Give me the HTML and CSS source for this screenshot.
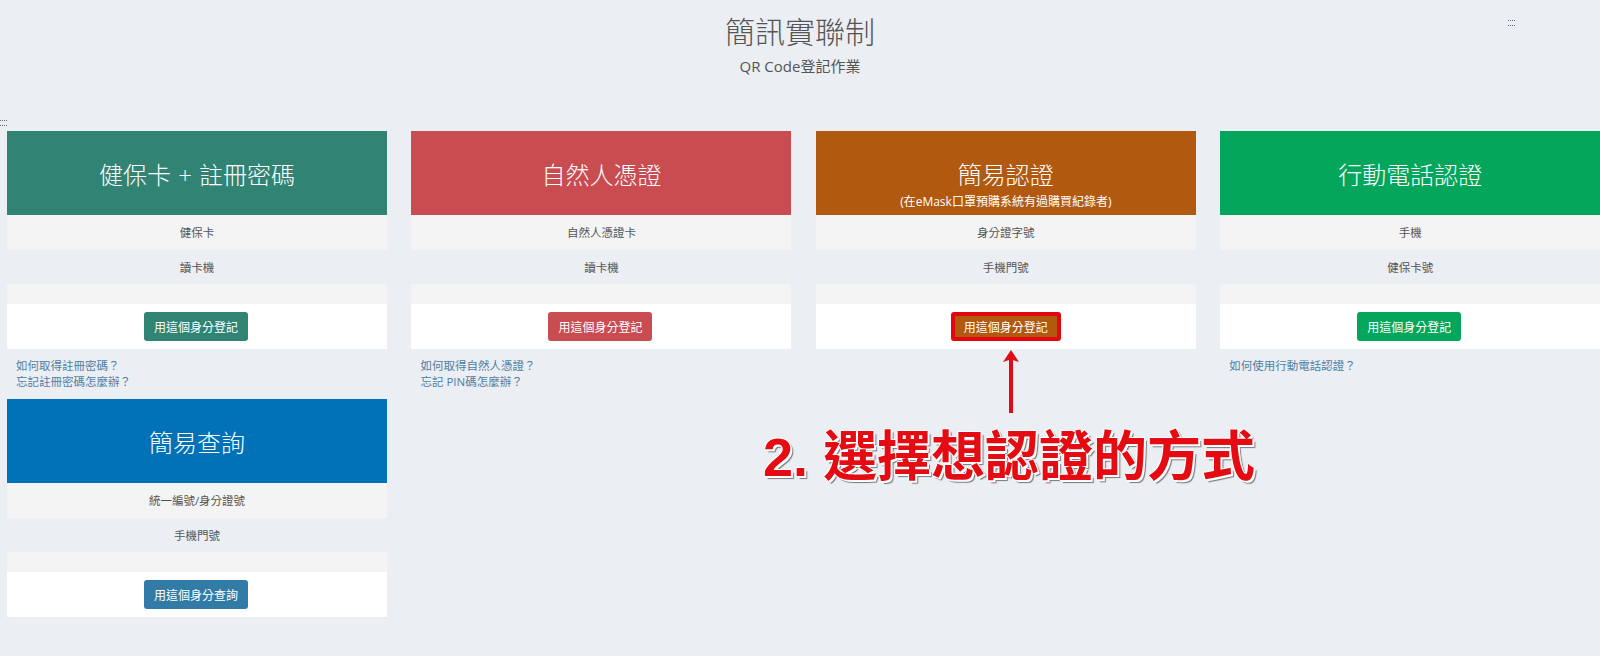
FILE: index.html
```html
<!DOCTYPE html>
<html lang="zh-Hant">
<head>
    <meta charset="UTF-8">
    <title>簡訊實聯制</title>
    <link rel="stylesheet" href="styles.css">
</head>
<body>
    <span class="dots dots-top"></span>
    <span class="dots dots-left"></span>

    <header class="page-head">
        <h1>簡訊實聯制</h1>
        <p>QR Code登記作業</p>
    </header>

    <main class="cards">
        <section class="card">
            <div class="card-title green"><h2>健保卡 + 註冊密碼</h2></div>
            <ul class="card-rows">
                <li>健保卡</li>
                <li>讀卡機</li>
                <li></li>
            </ul>
            <div class="card-foot"><button class="btn green">用這個身分登記</button></div>
            <div class="card-links">
                <a href="#">如何取得註冊密碼？</a>
                <a href="#">忘記註冊密碼怎麼辦？</a>
            </div>
        </section>

        <section class="card">
            <div class="card-title red"><h2>自然人憑證</h2></div>
            <ul class="card-rows">
                <li>自然人憑證卡</li>
                <li>讀卡機</li>
                <li></li>
            </ul>
            <div class="card-foot"><button class="btn red">用這個身分登記</button></div>
            <div class="card-links">
                <a href="#">如何取得自然人憑證？</a>
                <a href="#">忘記 PIN碼怎麼辦？</a>
            </div>
        </section>

        <section class="card">
            <div class="card-title orange has-note">
                <h2>簡易認證</h2>
                <small>(在eMask口罩預購系統有過購買紀錄者)</small>
            </div>
            <ul class="card-rows">
                <li>身分證字號</li>
                <li>手機門號</li>
                <li></li>
            </ul>
            <div class="card-foot"><button class="btn orange marked">用這個身分登記</button></div>
        </section>

        <section class="card">
            <div class="card-title bright-green"><h2>行動電話認證</h2></div>
            <ul class="card-rows">
                <li>手機</li>
                <li>健保卡號</li>
                <li></li>
            </ul>
            <div class="card-foot"><button class="btn bright-green">用這個身分登記</button></div>
            <div class="card-links">
                <a href="#">如何使用行動電話認證？</a>
            </div>
        </section>

        <section class="card">
            <div class="card-title blue"><h2>簡易查詢</h2></div>
            <ul class="card-rows">
                <li>統一編號/身分證號</li>
                <li>手機門號</li>
                <li></li>
            </ul>
            <div class="card-foot"><button class="btn steel">用這個身分查詢</button></div>
        </section>
    </main>

    <svg class="arrow" width="18" height="64" viewBox="0 0 18 64">
        <path d="M9 0 L17 12 L11 10 L11 63 L7 63 L7 10 L1 12 Z" fill="#e00b14"/>
    </svg>
    <div class="callout">2. 選擇想認證的方式</div>
</body>
</html>
```

FILE: styles.css
```css
* {
    box-sizing: border-box;
}
body {
    margin: 0;
    height: 656px;
    overflow: hidden;
    position: relative;
    background-color: #ebeef3;
    color: #555;
    font-family: "Open Sans", "Noto Sans CJK TC", sans-serif;
    font-size: 11.5px;
}
.page-head {
    height: 131px;
    padding-top: 12px;
    text-align: center;
    color: #555;
}
.page-head h1 {
    margin: 0;
    font-size: 30px;
    line-height: 40px;
    font-weight: 300;
}
.page-head p {
    margin: 4px 0 0;
    font-size: 15px;
    line-height: 20px;
}
.dots {
    position: absolute;
    width: 7px;
    height: 6px;
    border-top: 1px dotted #667;
    border-bottom: 1px dotted #667;
}
.dots-top { left: 1508px; top: 20px; }
.dots-left { left: 0; top: 120px; }

.cards {
    display: grid;
    grid-template-columns: repeat(4, 380px);
    column-gap: 24.4px;
    padding-left: 7px;
    align-items: start;
}
.card-title {
    height: 84px;
    padding-top: 24px;
    text-align: center;
    color: #fff;
}
.card-title h2 {
    margin: 0;
    font-size: 24px;
    line-height: 40px;
    font-weight: 300;
    word-spacing: 1px;
}
.card-title small {
    display: block;
    margin-top: 2px;
    font-size: 12px;
    line-height: 14px;
}
.card-title.has-note {
    padding-top: 26px;
}
.card-title.has-note h2 {
    line-height: 36px;
}
.green { background-color: #318373; }
.red { background-color: #c94d50; }
.orange { background-color: #b1590f; }
.bright-green { background-color: #04a65c; }
.blue { background-color: #0272b8; }
.steel { background-color: #337ba7; }

.card-rows {
    list-style: none;
    margin: 0;
    padding: 0;
    text-align: center;
}
.card-rows li {
    height: 34px;
    line-height: 36px;
}
.card-rows li:nth-child(odd) {
    background-color: #f4f4f4;
}
.card-rows li:first-child {
    height: 35px;
}
.card-rows li:last-child {
    height: 20px;
}
.card-foot {
    height: 45px;
    padding-top: 8px;
    background: #fff;
    text-align: center;
}
.btn {
    width: 104px;
    height: 29px;
    margin-right: 2px;
    padding: 0;
    border: none;
    border-radius: 3px;
    color: #fff;
    font-family: inherit;
    font-size: 12px;
}
.btn.marked {
    width: 110px;
    margin-right: 0;
    border: 4px solid #e2070f;
}
.card-links {
    padding: 9px 9px 9px;
    min-height: 50px;
}
.card-links a {
    display: block;
    line-height: 16px;
    color: #4f7ea3;
    text-decoration: none;
}

.arrow {
    position: absolute;
    left: 1002px;
    top: 350px;
}
.callout {
    position: absolute;
    left: 763px;
    top: 423px;
    font-family: "Liberation Sans", "Noto Sans CJK TC", sans-serif;
    font-size: 54px;
    line-height: 68px;
    font-weight: 700;
    white-space: nowrap;
    color: #e40c12;
    text-shadow: 1px 0 0 #fff, -1px 0 0 #fff, 0 -1px 0 #fff, 0 1px 0 #fff,
        2px 2px 0 #fff, 3px 3px 1px #777;
}
```
